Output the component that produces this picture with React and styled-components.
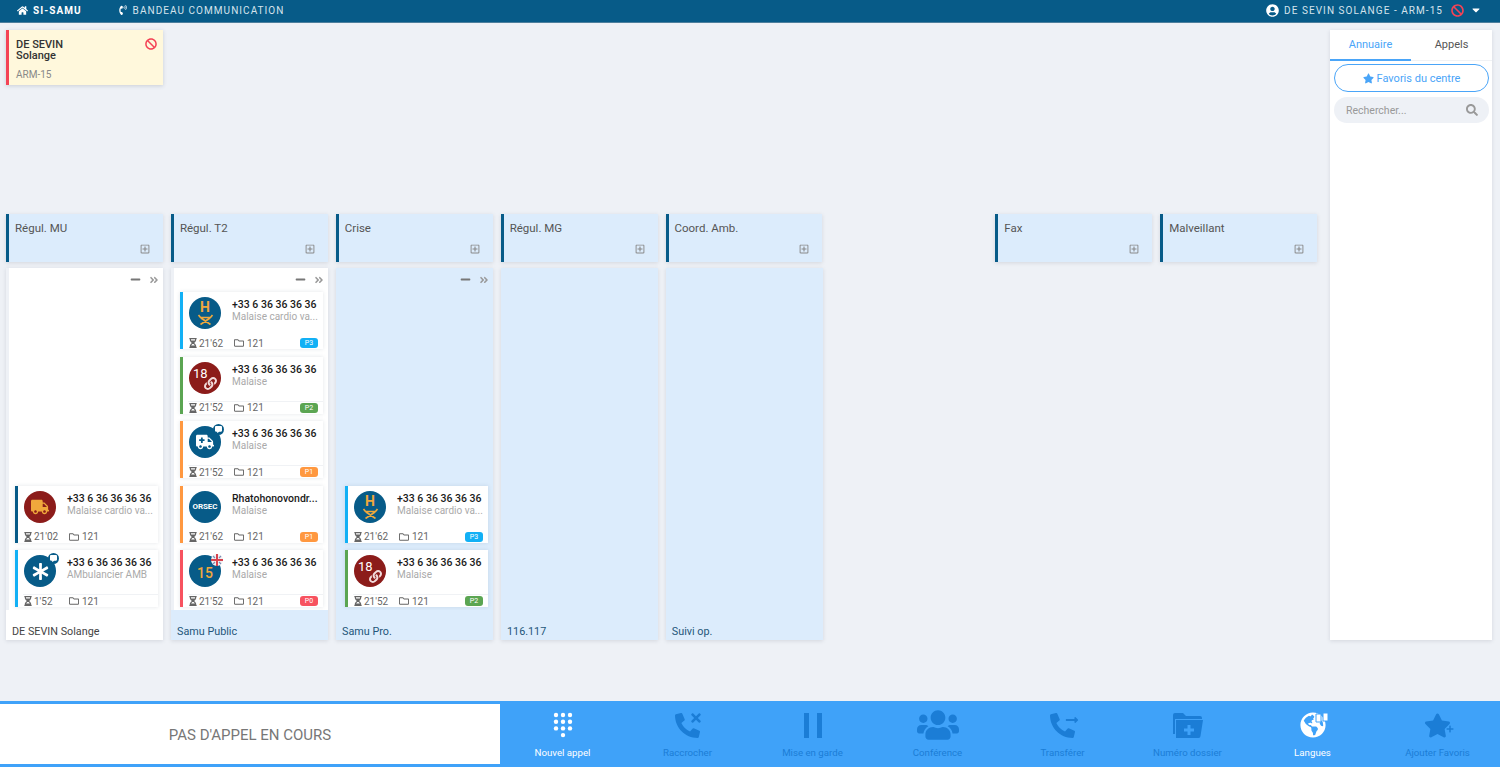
import React from "react";
import styled, { createGlobalStyle } from "styled-components";
import {
  FaHome,
  FaPhoneVolume,
  FaUserCircle,
  FaBan,
  FaCaretDown,
  FaStar,
  FaSearch,
  FaRegPlusSquare,
  FaMinus,
  FaAngleDoubleRight,
  FaHourglassHalf,
  FaRegFolder,
  FaTruck,
  FaAsterisk,
  FaAmbulance,
  FaLink,
  FaPhoneAlt,
  FaTimes,
  FaUsers,
  FaGlobeAmericas,
  FaPlus,
  FaLongArrowAltRight,
  FaCommentAlt,
} from "react-icons/fa";

const BLUE = "#075b88";
const PALE = "#dcecfc";
const BAR = "#3fa2f9";
const OFF = "#1b7dd6";
const CARE = "#f0a83c";
const DARKRED = "#8c1c1a";

const GlobalStyle = createGlobalStyle`
  html, body {
    margin: 0;
    padding: 0;
    background: #eef1f6;
    font-family: Roboto, "Liberation Sans", sans-serif;
  }
  * {
    box-sizing: border-box;
  }
`;

const Page = styled.div`
  height: 767px;
  display: flex;
  flex-direction: column;
  overflow: hidden;
`;

const TopBar = styled.header`
  height: 23px;
  flex: none;
  display: flex;
  align-items: center;
  padding: 0 18px 2px 17px;
  background: ${BLUE};
  border-bottom: 1px solid #4d7f9d;
  color: #d5e3ec;
  font-size: 10px;
  letter-spacing: 1.05px;
`;

const TopItem = styled.div`
  display: flex;
  align-items: center;
  gap: 5px;
  margin-right: ${(p) => p.$right || 0}px;
  color: ${(p) => (p.$strong ? "#fff" : "#d5e3ec")};
  font-weight: ${(p) => (p.$strong ? 700 : 400)};
  svg {
    color: #fff;
    flex: none;
  }
`;

const TopRight = styled.div`
  margin-left: auto;
  display: flex;
  align-items: center;
  gap: 6px;
  color: #e4edf3;
`;

const Main = styled.main`
  flex: 1;
  display: flex;
  justify-content: space-between;
  padding: 7px 8px 0 6px;
`;

const Board = styled.section`
  width: 1311px;
`;

const AgentZone = styled.div`
  height: 184px;
`;

const AgentCard = styled.div`
  position: relative;
  width: 157px;
  height: 55px;
  padding: 9px 0 0 7px;
  background: #fff8dc;
  border-left: 3px solid #f44356;
  box-shadow: 0 1px 4px rgba(60, 70, 90, 0.2);
  color: #333;
`;

const AgentName = styled.div`
  font-size: 11px;
  line-height: 11px;
  font-weight: 500;
`;

const AgentRole = styled.div`
  margin-top: 8px;
  font-size: 10px;
  color: #888;
`;

const AgentStatus = styled.span`
  position: absolute;
  top: 8px;
  right: 6px;
  color: #f44356;
  display: flex;
`;

const Grid = styled.div`
  display: grid;
  grid-template-columns: repeat(8, 1fr);
  column-gap: 8px;
  margin-bottom: ${(p) => p.$bottom || 0}px;
`;

const GroupHead = styled.div`
  position: relative;
  height: 48px;
  padding: 8px 0 0 6px;
  background: ${PALE};
  border-left: 3px solid ${BLUE};
  box-shadow: 0 1px 4px rgba(60, 70, 90, 0.15);
  color: #555;
  font-size: 11.5px;
  line-height: 13px;
`;

const GroupToggle = styled.span`
  position: absolute;
  right: 13px;
  bottom: 8px;
  display: flex;
  color: #888;
`;

const Column = styled.div`
  height: 372px;
  display: flex;
  flex-direction: column;
  box-shadow: 0 1px 4px rgba(60, 70, 90, 0.15);
  background: ${(p) => (p.$white ? "transparent" : PALE)};
`;

const ColumnBody = styled.div`
  flex: 1;
  min-height: 0;
  display: flex;
  flex-direction: column;
  margin-left: 3px;
  padding: 0 5px 3px 6px;
  background: ${(p) => (p.$white ? "#fff" : "transparent")};
`;

const ColumnTools = styled.div`
  height: 24px;
  flex: none;
  margin-right: -1px;
  display: flex;
  justify-content: flex-end;
  align-items: center;
  gap: 8px;
  padding-bottom: 1px;
  color: #777;
`;

const SkipMark = styled.span`
  display: flex;
  color: #999;
`;

const CardStack = styled.div`
  margin-top: auto;
  display: flex;
  flex-direction: column;
  gap: 7.5px;
`;

const ColumnFoot = styled.div`
  height: 30px;
  flex: none;
  padding: 16px 0 0 6px;
  background: ${(p) => (p.$white ? "#fff" : PALE)};
  color: ${(p) => (p.$white ? "#444" : "#24567a")};
  font-size: 10.8px;
  line-height: 12px;
`;

const CallCard = styled.article`
  height: 57px;
  width: 143px;
  flex: none;
  display: flex;
  flex-direction: column;
  background: #fff;
  border-left: 3px solid ${(p) => p.$color};
  box-shadow: 0 0 4px rgba(60, 70, 90, 0.14);
`;

const CardTop = styled.div`
  height: 44px;
  flex: none;
  display: flex;
  padding: 5px 0 0 6px;
`;

const Avatar = styled.div`
  position: relative;
  width: 32px;
  height: 32px;
  flex: none;
  border-radius: 50%;
  background: ${(p) => p.$bg || BLUE};
  display: flex;
  align-items: center;
  justify-content: center;
  color: #fff;
  font-size: 13px;
  line-height: 1;
`;

const AvatarCorner = styled.span`
  position: absolute;
  top: -2px;
  right: -3px;
  padding: 2px;
  display: flex;
  color: #fff;
  background: ${BLUE};
  border-radius: 50%;
`;

const FlagCorner = styled.span`
  position: absolute;
  top: -1px;
  right: -2px;
  display: flex;
`;

const CareStack = styled.div`
  display: flex;
  flex-direction: column;
  align-items: center;
  color: ${CARE};
  font-size: 14px;
  font-weight: 700;
  line-height: 13px;
`;

const Eighteen = styled.span`
  position: absolute;
  top: 5px;
  left: 4px;
  font-size: 13px;
`;

const LinkMark = styled.span`
  position: absolute;
  right: 4px;
  bottom: 4px;
  display: flex;
  color: #f2dcdc;
`;

const Fifteen = styled.span`
  color: ${CARE};
  font-size: 14px;
  font-weight: 500;
  margin-top: 3px;
`;

const Orsec = styled.span`
  font-size: 8px;
  font-weight: 700;
  letter-spacing: -0.1px;
`;

const CardText = styled.div`
  margin-left: 11px;
  width: 88px;
  padding-top: 2px;
  white-space: nowrap;
`;

const Phone = styled.div`
  font-size: 10.5px;
  line-height: 12px;
  font-weight: 500;
  color: #1b1b1b;
`;

const Reason = styled.div`
  font-size: 10px;
  line-height: 12px;
  color: #aaa;
`;

const CardFoot = styled.div`
  flex: 1;
  display: flex;
  align-items: center;
  margin-left: 5px;
  padding-right: 5px;
  border-top: 1px solid ${(p) => (p.$line ? "#f0f2f5" : "transparent")};
  color: #666;
  font-size: 10px;
`;

const Meta = styled.span`
  display: flex;
  align-items: center;
  gap: ${(p) => p.$gap}px;
  width: ${(p) => p.$width}px;
  svg {
    flex: none;
  }
`;

const Priority = styled.span`
  margin-left: auto;
  width: 18px;
  height: 10px;
  border-radius: 3px;
  background: ${(p) => p.$color};
  color: #fff;
  font-size: 7px;
  line-height: 10px;
  text-align: center;
`;

const Side = styled.aside`
  width: 162px;
  height: 610px;
  background: #fff;
  box-shadow: 0 1px 4px rgba(60, 70, 90, 0.15);
`;

const Tabs = styled.div`
  display: flex;
  height: 31px;
  border-bottom: 1px solid #f0f2f5;
`;

const Tab = styled.div`
  flex: 1;
  display: flex;
  align-items: center;
  justify-content: center;
  font-size: 11px;
  color: ${(p) => (p.$active ? "#4aa5f8" : "#555")};
  border-bottom: 2px solid ${(p) => (p.$active ? "#4aa5f8" : "transparent")};
  margin-bottom: -1px;
`;

const FavButton = styled.button`
  display: flex;
  align-items: center;
  justify-content: center;
  gap: 3px;
  width: 155px;
  height: 28px;
  margin: 3px 0 0 4px;
  border: 1px solid #4aa5f8;
  border-radius: 14px;
  background: #fff;
  color: #4aa5f8;
  font-family: inherit;
  font-size: 11px;
`;

const SearchBox = styled.div`
  display: flex;
  align-items: center;
  justify-content: space-between;
  width: 155px;
  height: 26px;
  margin: 5px 0 0 4px;
  padding: 0 11px 0 12px;
  border-radius: 13px;
  background: #eef1f6;
  color: #999;
  font-size: 10.5px;
`;

const BottomBar = styled.footer`
  height: 66px;
  flex: none;
  display: flex;
  background: ${BAR};
`;

const CallState = styled.div`
  width: 500px;
  flex: none;
  margin: 3px 0;
  padding-top: 1px;
  display: flex;
  align-items: center;
  justify-content: center;
  background: #fff;
  color: #777;
  font-size: 15px;
`;

const Actions = styled.nav`
  flex: 1;
  display: grid;
  grid-template-columns: repeat(8, 1fr);
`;

const Action = styled.div`
  display: flex;
  flex-direction: column;
  align-items: center;
  padding-top: 11px;
  color: ${(p) => (p.$on ? "#fff" : OFF)};
  font-size: 9.7px;
  line-height: 12px;
`;

const ActionIcon = styled.div`
  position: relative;
  width: 34px;
  height: 26px;
  margin-bottom: 9px;
  display: flex;
  align-items: center;
  justify-content: center;
  svg {
    flex: none;
  }
`;

const IconMark = styled.span`
  position: absolute;
  top: ${(p) => p.$top}px;
  right: ${(p) => p.$right}px;
  display: flex;
`;

const Stretcher = () => (
  <svg width="17" height="11" viewBox="0 0 17 11" fill="none" stroke={CARE} strokeWidth="1.7">
    <path d="M1.500 1l2 2.500h10l2-2.500M4 4l9.500 6.500M13 4L3.500 10.500" />
  </svg>
);

const UkFlag = () => (
  <svg width="12" height="12" viewBox="0 0 12 12">
    <circle cx="6" cy="6" r="6" fill="#f2f2f2" />
    <path d="M5 0h2v12H5zM0 5h12v2H0z" fill="#d8434e" />
    <path d="M2 2l2 2M10 2L8 4M2 10l2-2M10 10L8 8" stroke="#7d8db5" strokeWidth="1.2" />
  </svg>
);

const Dialpad = () => (
  <svg width="24" height="26" viewBox="0 0 24 26" fill="currentColor">
    {[0, 1, 2, 3].map((row) =>
      [0, 1, 2].map((col) =>
        row === 3 && col !== 1 ? null : (
          <circle key={`${row}-${col}`} cx={5 + col * 7} cy={3 + row * 6.7} r="2.2" />
        )
      )
    )}
  </svg>
);

const Pause = () => (
  <svg width="20" height="25" viewBox="0 0 20 25" fill="currentColor">
    <rect x="1" width="5" height="25" />
    <rect x="14" width="5" height="25" />
  </svg>
);

const FolderAdd = () => (
  <svg width="30" height="25" viewBox="0 0 30 25" fill="currentColor">
    <path d="M0 2a2 2 0 012-2h8l3 3h14a2 2 0 012 2v1H2v15H0z" />
    <path d="M3 7h27l-2.500 16a2 2 0 01-2 2H3z" />
    <path d="M14.500 12h3v3.500H21v3h-3.500V22h-3v-3.500H11v-3h3.500z" fill={BAR} />
  </svg>
);

const TinyFlags = () => (
  <svg width="14" height="14" viewBox="0 0 14 14">
    <path d="M1 2h5v8H1zM8 1h5v8H8z" fill="#fff" stroke={BAR} strokeWidth="1" />
  </svg>
);

const avatars = {
  stretcher: (
    <Avatar>
      <CareStack>
        H
        <Stretcher />
      </CareStack>
    </Avatar>
  ),
  eighteen: (
    <Avatar $bg={DARKRED}>
      <Eighteen>18</Eighteen>
      <LinkMark>
        <FaLink size={13} />
      </LinkMark>
    </Avatar>
  ),
  ambulance: (
    <Avatar>
      <FaAmbulance size={18} />
      <AvatarCorner>
        <FaCommentAlt size={7} />
      </AvatarCorner>
    </Avatar>
  ),
  orsec: (
    <Avatar>
      <Orsec>ORSEC</Orsec>
    </Avatar>
  ),
  fifteen: (
    <Avatar>
      <Fifteen>15</Fifteen>
      <FlagCorner>
        <UkFlag />
      </FlagCorner>
    </Avatar>
  ),
  truck: (
    <Avatar $bg={DARKRED}>
      <FaTruck size={18} color={CARE} />
    </Avatar>
  ),
  medic: (
    <Avatar>
      <FaAsterisk size={17} />
      <AvatarCorner>
        <FaCommentAlt size={7} />
      </AvatarCorner>
    </Avatar>
  ),
};

const PRIORITY = { P0: "#f7525f", P1: "#ff9840", P2: "#5ba552", P3: "#12b0f5" };

const PHONE = "+33 6 36 36 36 36";
const LONG_REASON = "Malaise cardio va...";

const callHolder = {
  hCare: { avatar: "stretcher", color: PRIORITY.P3, reason: LONG_REASON, time: "21'62", priority: "P3" },
  link: { avatar: "eighteen", color: PRIORITY.P2, reason: "Malaise", time: "21'52", priority: "P2", line: true },
};

const groups = [
  {
    title: "Régul. MU",
    foot: "DE SEVIN Solange",
    white: true,
    tools: true,
    calls: [
      { avatar: "truck", color: BLUE, reason: LONG_REASON, time: "21'02" },
      { avatar: "medic", color: PRIORITY.P3, reason: "AMbulancier AMB", time: "1'52", line: true },
    ],
  },
  {
    title: "Régul. T2",
    foot: "Samu Public",
    white: true,
    tools: true,
    calls: [
      callHolder.hCare,
      callHolder.link,
      { avatar: "ambulance", color: PRIORITY.P1, reason: "Malaise", time: "21'52", priority: "P1", line: true },
      { avatar: "orsec", color: PRIORITY.P1, name: "Rhatohonovondr...", reason: "Malaise", time: "21'62", priority: "P1" },
      { avatar: "fifteen", color: PRIORITY.P0, reason: "Malaise", time: "21'52", priority: "P0", line: true },
    ],
  },
  { title: "Crise", foot: "Samu Pro.", tools: true, calls: [callHolder.hCare, callHolder.link] },
  { title: "Régul. MG", foot: "116.117", calls: [] },
  { title: "Coord. Amb.", foot: "Suivi op.", calls: [] },
];

const actions = [
  { label: "Nouvel appel", on: true, icon: <Dialpad /> },
  {
    label: "Raccrocher",
    icon: (
      <>
        <FaPhoneAlt size={25} />
        <IconMark $top={-1} $right={2}>
          <FaTimes size={14} color={OFF} />
        </IconMark>
      </>
    ),
  },
  { label: "Mise en garde", icon: <Pause /> },
  { label: "Conférence", icon: <FaUsers size={42} /> },
  {
    label: "Transférer",
    icon: (
      <>
        <FaPhoneAlt size={25} />
        <IconMark $top={1} $right={1}>
          <FaLongArrowAltRight size={14} />
        </IconMark>
      </>
    ),
  },
  { label: "Numéro dossier", icon: <FolderAdd /> },
  {
    label: "Langues",
    on: true,
    icon: (
      <>
        <FaGlobeAmericas size={26} />
        <IconMark $top={0} $right={1}>
          <TinyFlags />
        </IconMark>
      </>
    ),
  },
  {
    label: "Ajouter Favoris",
    icon: (
      <>
        <FaStar size={27} />
        <IconMark $top={13} $right={1}>
          <FaPlus size={8} />
        </IconMark>
      </>
    ),
  },
];

const Call = ({ call }) => (
  <CallCard $color={call.color}>
    <CardTop>
      {avatars[call.avatar]}
      <CardText>
        <Phone>{call.name || PHONE}</Phone>
        <Reason>{call.reason}</Reason>
      </CardText>
    </CardTop>
    <CardFoot $line={call.line}>
      <Meta $width={46} $gap={1}>
        <FaHourglassHalf size={10} />
        {call.time}
      </Meta>
      <Meta $width={30} $gap={3}>
        <FaRegFolder size={10} />
        121
      </Meta>
      {call.priority && <Priority $color={PRIORITY[call.priority]}>{call.priority}</Priority>}
    </CardFoot>
  </CallCard>
);

export default function App() {
  return (
    <Page>
      <GlobalStyle />
      <TopBar>
        <TopItem $strong $right={36}>
          <FaHome size={11} />
          SI-SAMU
        </TopItem>
        <TopItem>
          <FaPhoneVolume size={10} />
          BANDEAU COMMUNICATION
        </TopItem>
        <TopRight>
          <TopItem $right={2}>
            <FaUserCircle size={13} />
            DE SEVIN SOLANGE - ARM-15
          </TopItem>
          <FaBan size={13} color="#f44356" />
          <FaCaretDown size={12} color="#fff" />
        </TopRight>
      </TopBar>

      <Main>
        <Board>
          <AgentZone>
            <AgentCard>
              <AgentName>
                DE SEVIN
                <br />
                Solange
              </AgentName>
              <AgentRole>ARM-15</AgentRole>
              <AgentStatus>
                <FaBan size={12} />
              </AgentStatus>
            </AgentCard>
          </AgentZone>

          <Grid $bottom={6}>
            {groups.map((g) => (
              <GroupHead key={g.title}>
                {g.title}
                <GroupToggle>
                  <FaRegPlusSquare size={10} />
                </GroupToggle>
              </GroupHead>
            ))}
            <div />
            {["Fax", "Malveillant"].map((title) => (
              <GroupHead key={title}>
                {title}
                <GroupToggle>
                  <FaRegPlusSquare size={10} />
                </GroupToggle>
              </GroupHead>
            ))}
          </Grid>

          <Grid>
            {groups.map((g) => (
              <Column key={g.title} $white={g.white}>
                <ColumnBody $white={g.white}>
                  {g.tools && (
                    <ColumnTools>
                      <FaMinus size={11} />
                      <SkipMark>
                        <FaAngleDoubleRight size={10} />
                      </SkipMark>
                    </ColumnTools>
                  )}
                  <CardStack>
                    {g.calls.map((call, i) => (
                      <Call key={i} call={call} />
                    ))}
                  </CardStack>
                </ColumnBody>
                <ColumnFoot $white={g.foot === "DE SEVIN Solange"}>{g.foot}</ColumnFoot>
              </Column>
            ))}
          </Grid>
        </Board>

        <Side>
          <Tabs>
            <Tab $active>Annuaire</Tab>
            <Tab>Appels</Tab>
          </Tabs>
          <FavButton>
            <FaStar size={11} />
            Favoris du centre
          </FavButton>
          <SearchBox>
            Rechercher...
            <FaSearch size={12} />
          </SearchBox>
        </Side>
      </Main>

      <BottomBar>
        <CallState>PAS D'APPEL EN COURS</CallState>
        <Actions>
          {actions.map((a) => (
            <Action key={a.label} $on={a.on}>
              <ActionIcon>{a.icon}</ActionIcon>
              {a.label}
            </Action>
          ))}
        </Actions>
      </BottomBar>
    </Page>
  );
}
